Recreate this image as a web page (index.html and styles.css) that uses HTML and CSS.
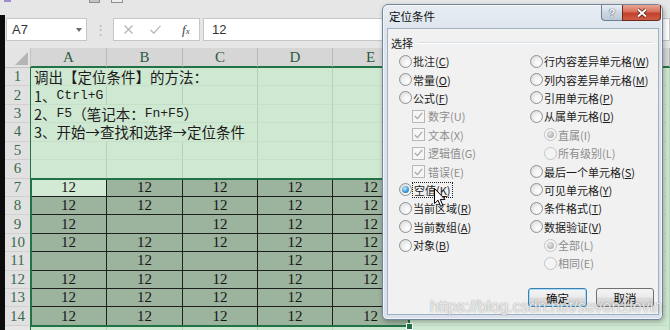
FILE: index.html
```html
<!DOCTYPE html>
<html>
<head>
<meta charset="utf-8">
<title>定位条件</title>
<link rel="stylesheet" href="styles.css">
</head>
<body>
<div class="topbar">
  <span class="tb-purple"></span>
  <span class="tb-g1"></span>
  <span class="tb-g2"></span>
</div>
<div class="workspace">
  <div class="formula-row">
    <div class="namebox"><span>A7</span><span class="caret"></span></div>
    <div class="grip">⋮</div>
    <div class="fxbox">
      <svg class="ic-x" width="9" height="9" viewBox="0 0 9 9"><path d="M0.5 0.5 L8.5 8.5 M8.5 0.5 L0.5 8.5" stroke="#b4b4b4" stroke-width="1.2" fill="none"/></svg>
      <svg class="ic-ok" width="11" height="9" viewBox="0 0 11 9"><path d="M0.5 5 L3.8 8.2 L10.5 0.8" stroke="#b4b4b4" stroke-width="1.2" fill="none"/></svg>
      <span class="fx">f<span class="fx-x">x</span></span>
    </div>
    <div class="finput">12</div>
  </div>

  <div class="sheet">
    <div class="corner"><span class="tri"></span></div>
    <div class="ch">A</div><div class="ch">B</div><div class="ch">C</div><div class="ch">D</div><div class="ch">E</div><div class="ch"></div>

    <div class="rh">1</div>
    <div class="c txt s3">调出【定位条件】的方法：</div><div class="c"></div><div class="c"></div><div class="c"></div>

    <div class="rh">2</div>
    <div class="c txt">1、<span class="h">Ctrl+G</span></div><div class="c"></div><div class="c"></div><div class="c"></div><div class="c"></div><div class="c"></div>

    <div class="rh">3</div>
    <div class="c txt s3">2、<span class="h">F5</span>（笔记本：<span class="h">Fn+F5</span>）</div><div class="c"></div><div class="c"></div><div class="c"></div>

    <div class="rh">4</div>
    <div class="c txt s3">3、开始→查找和选择→定位条件</div><div class="c"></div><div class="c"></div><div class="c"></div>

    <div class="rh">5</div>
    <div class="c"></div><div class="c"></div><div class="c"></div><div class="c"></div><div class="c"></div><div class="c"></div>

    <div class="rh">6</div>
    <div class="c"></div><div class="c"></div><div class="c"></div><div class="c"></div><div class="c"></div><div class="c"></div>

    <div class="rh">7</div>
    <div class="d act">12</div><div class="d">12</div><div class="d">12</div><div class="d">12</div><div class="d">12</div><div class="c"></div>

    <div class="rh">8</div>
    <div class="d">12</div><div class="d">12</div><div class="d">12</div><div class="d">12</div><div class="d">12</div><div class="c"></div>

    <div class="rh">9</div>
    <div class="d">12</div><div class="d"></div><div class="d">12</div><div class="d">12</div><div class="d">12</div><div class="c"></div>

    <div class="rh">10</div>
    <div class="d">12</div><div class="d">12</div><div class="d">12</div><div class="d">12</div><div class="d">12</div><div class="c"></div>

    <div class="rh">11</div>
    <div class="d"></div><div class="d">12</div><div class="d"></div><div class="d">12</div><div class="d">12</div><div class="c"></div>

    <div class="rh">12</div>
    <div class="d">12</div><div class="d">12</div><div class="d">12</div><div class="d">12</div><div class="d">12</div><div class="c"></div>

    <div class="rh">13</div>
    <div class="d">12</div><div class="d">12</div><div class="d">12</div><div class="d">12</div><div class="d"></div><div class="c"></div>

    <div class="rh">14</div>
    <div class="d">12</div><div class="d">12</div><div class="d">12</div><div class="d">12</div><div class="d">12</div><div class="c"></div>

    <div class="rh r15"></div>
    <div class="c"></div><div class="c"></div><div class="c"></div><div class="c"></div><div class="c"></div><div class="c"></div>

    <div class="sel sel-outer"></div>
    <div class="sel sel-inner"><span class="handle"></span></div>
  </div>
</div>

<div class="dialog">
  <div class="titlebar">
    <span class="title">定位条件</span>
    <div class="caption">
      <span class="cap-help">?</span>
      <span class="cap-close">
        <svg width="12" height="10" viewBox="0 0 12 10"><path d="M2 1.5 L10 8.5 M10 1.5 L2 8.5" stroke="#5a1a12" stroke-width="3.6" fill="none"/><path d="M2 1.5 L10 8.5 M10 1.5 L2 8.5" stroke="#fff" stroke-width="2" fill="none"/></svg>
      </span>
    </div>
  </div>
  <div class="client">
    <div class="group"><span>选择</span><span class="rule"></span></div>
    <div class="opts">
      <div class="col left">
        <div class="opt"><span class="radio"></span>批注(<u>C</u>)</div>
        <div class="opt"><span class="radio"></span>常量(<u>O</u>)</div>
        <div class="opt"><span class="radio"></span>公式(<u>F</u>)</div>
        <div class="opt sub dis"><span class="check"><svg width="9" height="8" viewBox="0 0 9 8"><path d="M0.8 4 L3.4 6.6 L8.2 0.8" stroke="#a9a9a9" stroke-width="1.3" fill="none"/></svg></span>数字(U)</div>
        <div class="opt sub dis"><span class="check"><svg width="9" height="8" viewBox="0 0 9 8"><path d="M0.8 4 L3.4 6.6 L8.2 0.8" stroke="#a9a9a9" stroke-width="1.3" fill="none"/></svg></span>文本(X)</div>
        <div class="opt sub dis"><span class="check"><svg width="9" height="8" viewBox="0 0 9 8"><path d="M0.8 4 L3.4 6.6 L8.2 0.8" stroke="#a9a9a9" stroke-width="1.3" fill="none"/></svg></span>逻辑值(G)</div>
        <div class="opt sub dis"><span class="check"><svg width="9" height="8" viewBox="0 0 9 8"><path d="M0.8 4 L3.4 6.6 L8.2 0.8" stroke="#a9a9a9" stroke-width="1.3" fill="none"/></svg></span>错误(E)</div>
        <div class="opt"><span class="radio on"></span><span class="focus">空值(<u>K</u>)</span></div>
        <div class="opt"><span class="radio"></span>当前区域(<u>R</u>)</div>
        <div class="opt"><span class="radio"></span>当前数组(<u>A</u>)</div>
        <div class="opt"><span class="radio"></span>对象(<u>B</u>)</div>
      </div>
      <div class="col right">
        <div class="opt"><span class="radio"></span>行内容差异单元格(<u>W</u>)</div>
        <div class="opt"><span class="radio"></span>列内容差异单元格(<u>M</u>)</div>
        <div class="opt"><span class="radio"></span>引用单元格(<u>P</u>)</div>
        <div class="opt"><span class="radio"></span>从属单元格(<u>D</u>)</div>
        <div class="opt sub dis"><span class="radio on"></span>直属(I)</div>
        <div class="opt sub dis"><span class="radio"></span>所有级别(L)</div>
        <div class="opt"><span class="radio"></span>最后一个单元格(<u>S</u>)</div>
        <div class="opt"><span class="radio"></span>可见单元格(<u>Y</u>)</div>
        <div class="opt"><span class="radio"></span>条件格式(<u>T</u>)</div>
        <div class="opt"><span class="radio"></span>数据验证(<u>V</u>)</div>
        <div class="opt sub dis"><span class="radio on"></span>全部(L)</div>
        <div class="opt sub dis"><span class="radio"></span>相同(E)</div>
      </div>
    </div>
    <div class="btns">
      <button class="btn default">确定</button>
      <button class="btn cancel">取消</button>
    </div>
  </div>
</div>

<svg class="cursor" width="13" height="20" viewBox="0 0 13 20"><path d="M0.5 0.5 L0.5 15.5 L4 12.2 L6.6 18.3 L8.8 17.4 L6.3 11.4 L11 11.4 Z" fill="#fff" stroke="#000" stroke-width="1"/></svg>

<div class="watermark">https://blog.csdn.net/seven1levin</div>
</body>
</html>
```

FILE: styles.css
```css
* { box-sizing: border-box; margin: 0; padding: 0; }
html, body { width: 670px; height: 330px; overflow: hidden; }
body {
  position: relative;
  background: #e6e6e6;
  font-family: "Noto Sans", "Noto Sans CJK SC", sans-serif;
  color: #1e1e1e;
}

/* ribbon remnant */
.topbar { height: 15px; display: flex; align-items: flex-start; padding-left: 4px; }
.tb-purple { width: 7px; height: 2px; background: #a08ccf; }
.tb-g1 { width: 11px; height: 3px; margin-left: 78px; background: #c4c4c4; border: 1px solid #8e8e8e; border-top: none; }
.tb-g2 { width: 12px; height: 3px; margin-left: 11px; background: #ededed; border: 1px solid #8e8e8e; border-top: none; }

.workspace { height: 315px; overflow: hidden; border-left: 5px solid #0c0c0c; }

/* formula bar */
.formula-row { height: 33px; display: flex; align-items: flex-start; padding: 3px 0 0 1px; }
.namebox {
  width: 81px; height: 23px; background: #fff; border: 1px solid #c6c6c6;
  display: flex; align-items: center; justify-content: space-between;
  padding: 0 4px 0 5px; font-family: "Liberation Sans", sans-serif; font-size: 13px; color: #333;
}
.caret { width: 0; height: 0; border-left: 3px solid transparent; border-right: 3px solid transparent; border-top: 4px solid #6a6a6a; }
.grip { width: 26px; height: 23px; text-align: center; line-height: 23px; color: #b8b8b8; font-size: 13px; }
.fxbox {
  width: 87px; height: 23px; background: #fff; border: 1px solid #c6c6c6;
  display: flex; align-items: center; padding-left: 10px;
}
.ic-ok { margin-left: 17px; }
.fx { margin-left: 21px; font-family: "Liberation Serif", serif; font-style: italic; font-size: 13px; color: #444; }
.fx-x { font-size: 9px; }
.finput {
  flex: 1; height: 23px; margin-left: 3px; background: #fff; border: 1px solid #c6c6c6;
  padding-left: 8px; line-height: 21px; font-family: "Liberation Sans", sans-serif; font-size: 13px; color: #333;
}

/* sheet */
.sheet {
  position: relative;
  display: grid;
  grid-template-columns: 26px 76px 76px 75px 75px 76px 1fr;
  grid-template-rows: 20px repeat(15, 18.43px);
  font-family: "Liberation Serif", serif;
  font-size: 15px;
}
.corner { position: relative; background: #e4e4e4; border-right: 1px solid #c2c2c2; border-bottom: 1px solid #c2c2c2; }
.tri {
  position: absolute; right: 2px; bottom: 2px; width: 0; height: 0;
  border-left: 13px solid transparent; border-bottom: 13px solid #b5b5b5;
}
.ch {
  background: #d6d6d6; border-right: 1px solid #b9b9b9; border-bottom: 2px solid #217346;
  display: flex; align-items: center; justify-content: center; color: #2d5a3e;
}
.rh {
  background: #e1e1e1; border-right: 1px solid #bcbcbc; border-bottom: 1px solid #d0d0d0;
  display: flex; align-items: center; justify-content: center; color: #3a6a4c;
}
.rh.r15 { background: #e6e6e6; }
.c { background: #cfe8d1; border-right: 1px solid #b6d1b9; border-bottom: 1px solid #c6dfc8; }
.txt {
  display: flex; align-items: center; padding-left: 3px; white-space: nowrap;
  font-family: "Noto Sans CJK SC", sans-serif; font-size: 14.5px; line-height: 17px; color: #1c1c1c;
}
.s3 { grid-column: span 3; }
.h { font-family: "Liberation Mono", monospace; font-size: 13px; }
.d {
  background: #9cb39e; border-right: 1px solid #1f1f1f; border-bottom: 1px solid #1f1f1f;
  display: flex; align-items: center; justify-content: center; color: #161616;
}
.d.act { background: #d2ead3; }

.sel { position: absolute; pointer-events: none; }
.sel-outer { left: 25px; top: 19px; right: -10px; bottom: -10px; border: 1px solid #217346; }
.sel-inner { left: 25px; top: 129.6px; width: 380px; height: 149.4px; border: 2px solid #217346; }
.handle {
  position: absolute; right: -5px; bottom: -5px; width: 7px; height: 7px;
  background: #217346; border: 1px solid #fff;
}

/* dialog */
.dialog {
  position: absolute; left: 382px; top: 4px; width: 281px; height: 316px;
  border: 1px solid #74849a; border-radius: 6px 6px 5px 5px;
  background: linear-gradient(#e8edf3, #dde5ee 24px, #d9e2ec);
  box-shadow: inset 0 0 0 1px rgba(255,255,255,0.6), 1px 2px 5px rgba(0,0,0,0.3);
  padding: 0 3px 4px 4px;
  display: flex; flex-direction: column;
  font-family: "Noto Sans CJK SC", sans-serif; font-size: 11px; color: #1a1a1a;
}
.titlebar { height: 23px; display: flex; justify-content: space-between; align-items: flex-start; }
.title { padding-left: 2px; line-height: 22px; font-size: 11.5px; color: #111; }
.caption { display: flex; margin-right: -2px; }
.cap-help {
  width: 21px; height: 16px; display: flex; align-items: center; justify-content: center;
  background: linear-gradient(#e9eef4, #cdd7e2 50%, #bcc8d6);
  border: 1px solid #6f7f92; border-top: none; border-right: none; border-radius: 0 0 0 4px;
  font-family: "Liberation Sans", sans-serif; font-weight: bold; font-size: 11px; color: #fff;
  text-shadow: 0 0 1px #3b4b5e, 0 0 1px #3b4b5e;
}
.cap-close {
  width: 39px; height: 16px; display: flex; align-items: center; justify-content: center;
  background: linear-gradient(#e8a595, #d6705c 45%, #c2412c 55%, #cf5c43);
  border: 1px solid #6b2a20; border-top: none; border-radius: 0 0 4px 0;
}
.client {
  flex: 1; background: #f1f1f1; border: 1px solid #a3b0bf;
  padding: 7px 4px 7px 3px;
  display: flex; flex-direction: column;
}
.group { height: 14px; display: flex; align-items: center; }
.rule { flex: 1; margin: 0 1px 0 5px; border-top: 1px solid #d5dfe5; border-bottom: 1px solid #fff; }
.opts { margin-top: 2px; display: flex; }
.col { display: flex; flex-direction: column; }
.col.left { width: 131px; margin-left: 8px; }
.opt { height: 18.4px; display: flex; align-items: center; white-space: nowrap; line-height: 14px; }
.opt u { text-decoration: underline; text-underline-offset: 1px; }
.col.left .opt.sub { padding-left: 13px; }
.col.right .opt.sub { padding-left: 14px; }
.dis { color: #8d8d8d; }

.radio {
  position: relative; flex: none; width: 13px; height: 13px; margin-right: 1px; border-radius: 50%;
  border: 1px solid #8f9294;
  background: radial-gradient(circle at 65% 65%, #ffffff 0, #f1f1f1 40%, #d2d2d2 100%);
}
.radio.on::after {
  content: ""; position: absolute; left: 2px; top: 2px; width: 7px; height: 7px; border-radius: 50%;
  background: radial-gradient(circle at 40% 35%, #c7ecff 0, #3d9ad6 55%, #1b5c92 100%);
}
.dis .radio { border-color: #c4c4c4; background: #f4f4f4; }
.dis .radio.on::after { background: radial-gradient(circle at 40% 35%, #e6e6e6 0, #b4b4b4 70%); }
.check {
  flex: none; width: 13px; height: 13px; margin-right: 3px;
  border: 1px solid #b8b8b8; background: #f6f6f6;
  display: flex; align-items: center; justify-content: center;
}
.focus { border: 1px dotted #1e1e1e; padding: 0 1px; line-height: 14px; margin-left: -1px; }

.btns { margin-top: auto; display: flex; justify-content: flex-end; gap: 9px; }
.btn {
  height: 19px; border-radius: 3px; font-family: "Noto Sans CJK SC", sans-serif; font-size: 11.5px; color: #111;
  background: linear-gradient(#f4f4f4, #ebebeb 48%, #dddddd 52%, #cfcfcf);
  border: 1px solid #707070; line-height: 16px;
}
.btn.default { width: 59px; border-color: #3c7fb1; box-shadow: inset 0 0 0 1px #a9dcf6; }
.btn.cancel { width: 58px; }

.cursor { position: absolute; left: 434px; top: 188px; }

.watermark {
  position: absolute; left: 430px; top: 298px;
  font-family: "Liberation Sans", sans-serif; font-size: 16px; white-space: nowrap;
  color: rgba(255,255,255,0.8); text-shadow: 0 0 1px rgba(70,70,70,0.5), 0 0 2px rgba(120,120,120,0.3);
}
```
